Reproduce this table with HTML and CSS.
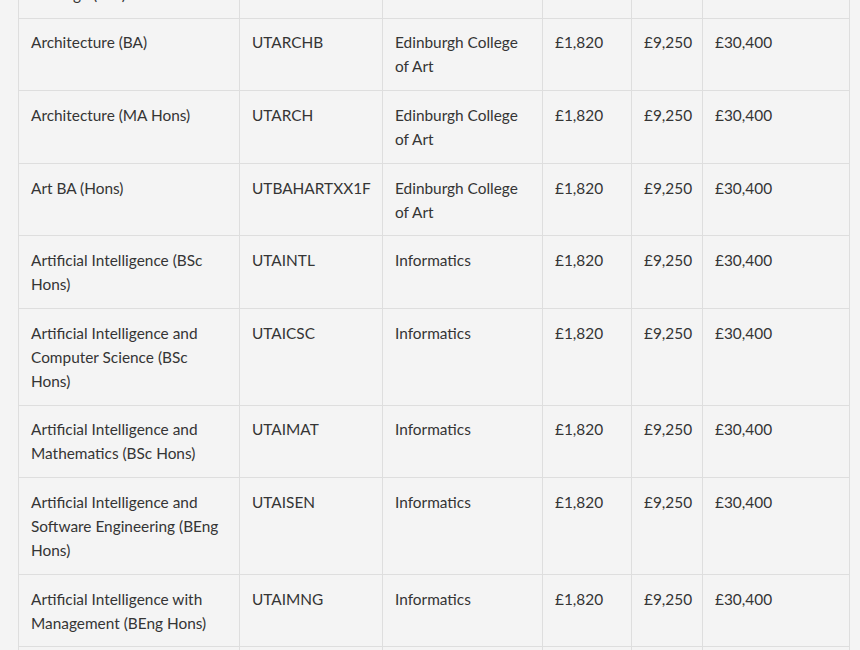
FILE: index.html
```html
<!DOCTYPE html>
<html lang="en">
<head>
<meta charset="utf-8">
<title>Programme fees</title>
<link rel="stylesheet" href="styles.css">
</head>
<body>
<div class="page">
  <table class="fees">
    <colgroup>
      <col class="c-name"><col class="c-code"><col class="c-school"><col class="c-fee1"><col class="c-fee2"><col class="c-fee3">
    </colgroup>
    <tbody>
      <tr><td>Architectural History and Heritage (MA)</td><td>UTAHHM</td><td>Edinburgh College of Art</td><td>£1,820</td><td>£9,250</td><td>£30,400</td></tr>
      <tr><td>Architecture (BA)</td><td>UTARCHB</td><td>Edinburgh College of Art</td><td>£1,820</td><td>£9,250</td><td>£30,400</td></tr>
      <tr><td>Architecture (MA Hons)</td><td>UTARCH</td><td>Edinburgh College of Art</td><td>£1,820</td><td>£9,250</td><td>£30,400</td></tr>
      <tr><td>Art BA (Hons)</td><td>UTBAHARTXX1F</td><td>Edinburgh College of Art</td><td>£1,820</td><td>£9,250</td><td>£30,400</td></tr>
      <tr><td>Artificial Intelligence (BSc Hons)</td><td>UTAINTL</td><td>Informatics</td><td>£1,820</td><td>£9,250</td><td>£30,400</td></tr>
      <tr><td>Artificial Intelligence and Computer Science (BSc Hons)</td><td>UTAICSC</td><td>Informatics</td><td>£1,820</td><td>£9,250</td><td>£30,400</td></tr>
      <tr><td>Artificial Intelligence and Mathematics (BSc Hons)</td><td>UTAIMAT</td><td>Informatics</td><td>£1,820</td><td>£9,250</td><td>£30,400</td></tr>
      <tr><td>Artificial Intelligence and Software Engineering (BEng Hons)</td><td>UTAISEN</td><td>Informatics</td><td>£1,820</td><td>£9,250</td><td>£30,400</td></tr>
      <tr><td>Artificial Intelligence with Management (BEng Hons)</td><td>UTAIMNG</td><td>Informatics</td><td>£1,820</td><td>£9,250</td><td>£30,400</td></tr>
      <tr><td>Artificial Intelligence with Management (BSc Hons)</td><td>UTAIMNB</td><td>Informatics</td><td>£1,820</td><td>£9,250</td><td>£30,400</td></tr>
    </tbody>
  </table>
</div>
</body>
</html>
```
FILE: styles.css
```css
html, body {
  margin: 0;
  padding: 0;
  background: #f4f4f4;
}
body {
  font-family: Lato, "Liberation Sans", sans-serif;
  font-size: 15.4px;
  line-height: 24px;
  color: #353535;
  overflow: hidden;
  height: 650px;
}
.page {
  padding: 0 11px 0 18px;
}
.fees {
  margin-top: -55px;
  border-collapse: collapse;
  table-layout: fixed;
  width: 831px;
  background: #f4f4f4;
}
.fees td {
  border: 1px solid #dedede;
  padding: 11.8px 12px;
  vertical-align: top;
  text-align: left;
}
.c-name { width: 221px; }
.c-code { width: 143px; }
.c-school { width: 160px; }
.c-fee1 { width: 89px; }
.c-fee2 { width: 71px; }
.c-fee3 { width: 147px; }
```
